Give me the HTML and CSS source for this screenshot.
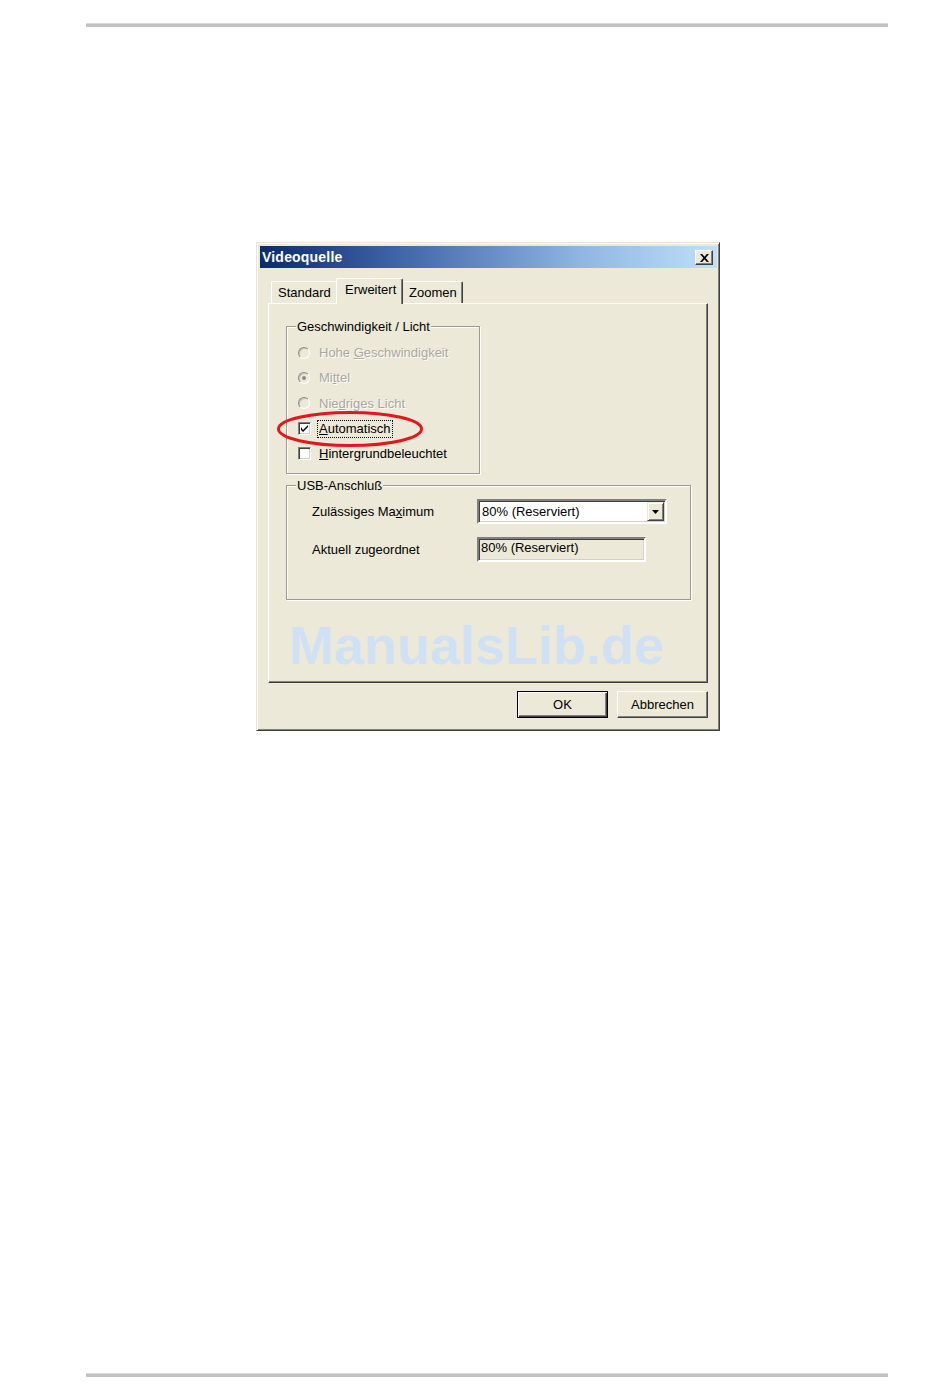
FILE: index.html
```html
<!DOCTYPE html>
<html lang="de">
<head>
<meta charset="utf-8">
<title>Videoquelle</title>
<link rel="stylesheet" href="styles.css">
</head>
<body>
<div class="page">
  <div class="rule rule-top"></div>

  <div class="dialog">
    <div class="titlebar">
      <span class="title">Videoquelle</span>
      <span class="close-btn">
        <svg width="9" height="8" viewBox="0 0 9 8"><path d="M0 0h2.2l2.3 2.8L6.8 0H9L5.6 4 9 8H6.8L4.5 5.2 2.2 8H0l3.4-4z" fill="#000"/></svg>
      </span>
    </div>

    <div class="content">
      <div class="tabs">
        <div class="tab tab-standard">Standard</div>
        <div class="tab tab-active">Erweitert</div>
        <div class="tab tab-zoom">Zoomen</div>
      </div>

      <div class="panel">
        <fieldset class="group group-speed">
          <legend>Geschwindigkeit / Licht</legend>
          <div class="rows">
            <div class="row disabled"><span class="radio"></span><span class="label">Hohe <u>G</u>eschwindigkeit</span></div>
            <div class="row disabled"><span class="radio checked"></span><span class="label">Mi<u>t</u>tel</span></div>
            <div class="row disabled"><span class="radio"></span><span class="label">Nie<u>d</u>riges Licht</span></div>
            <div class="row row-auto">
              <span class="checkbox"><svg width="7" height="7" viewBox="0 0 7 7"><path d="M0 2v3l2 2 5-5V0L2 5z" fill="#000"/></svg></span>
              <span class="label focus"><u>A</u>utomatisch</span>
              <svg class="mark" width="150" height="38" viewBox="0 0 150 38"><ellipse cx="74" cy="19" rx="71.5" ry="16.5" fill="none" stroke="#e5151b" stroke-width="3"/></svg>
            </div>
            <div class="row"><span class="checkbox"></span><span class="label"><u>H</u>intergrundbeleuchtet</span></div>
          </div>
        </fieldset>

        <fieldset class="group group-usb">
          <legend>USB-Anschluß</legend>
          <div class="usb-rows">
            <div class="usb-row">
              <span class="usb-label">Zulässiges Ma<u>x</u>imum</span>
              <div class="combo">
                <span class="combo-text">80% (Reserviert)</span>
                <span class="combo-btn"><svg width="7" height="4" viewBox="0 0 7 4"><path d="M0 0h7L3.5 4z" fill="#000"/></svg></span>
              </div>
            </div>
            <div class="usb-row usb-row-2">
              <span class="usb-label">Aktuell zugeordnet</span>
              <div class="readonly">80% (Reserviert)</div>
            </div>
          </div>
        </fieldset>

        <div class="watermark">ManualsLib.de</div>
      </div>

      <div class="footer">
        <div class="btn btn-default"><span>OK</span></div>
        <div class="btn">Abbrechen</div>
      </div>
    </div>
  </div>

  <div class="rule rule-bottom"></div>
</div>
</body>
</html>
```

FILE: styles.css
```css
* { box-sizing: border-box; }

body {
  margin: 0;
  background: #fff;
  font-family: "Liberation Sans", Arial, sans-serif;
  font-size: 13px;
  color: #000;
}

.page {
  width: 950px;
  height: 1398px;
  display: flex;
  flex-direction: column;
}

.rule {
  margin-left: 86px;
  width: 802px;
  height: 4px;
  background: #c2c2c2;
  border-top: 1px solid #dadada;
  flex: none;
}
.rule-top { margin-top: 23px; }
.rule-bottom { margin-top: 642px; }

/* dialog window */
.dialog {
  margin: 215px 0 0 256px;
  width: 464px;
  height: 489px;
  flex: none;
  background: #ece9d8;
  border: 1px solid;
  border-color: #e6e3d4 #404040 #404040 #e6e3d4;
  box-shadow: inset 1px 1px #fff, inset -1px -1px #808080;
  padding: 3px 2px 0 3px;
  display: flex;
  flex-direction: column;
}

.titlebar {
  height: 22px;
  flex: none;
  display: flex;
  align-items: center;
  justify-content: space-between;
  padding: 0 4px 0 2px;
  background: linear-gradient(to right, #0c2a6e 0%, #3f64a8 30%, #8fb5e2 70%, #bfe0fa 100%);
}
.title {
  color: #fff;
  font-weight: bold;
  font-size: 14px;
  letter-spacing: 0.2px;
}
.close-btn {
  width: 18px;
  height: 15px;
  background: #ece9d8;
  border: 1px solid;
  border-color: #fff #404040 #404040 #fff;
  box-shadow: inset -1px -1px #808080;
  display: flex;
  align-items: center;
  justify-content: center;
  margin-top: 1px;
}

.content {
  flex: 1;
  display: flex;
  flex-direction: column;
  padding: 10px 9px 0 8px;
}

/* tabs */
.tabs {
  display: flex;
  align-items: flex-end;
  height: 25px;
  flex: none;
  padding-left: 3px;
  position: relative;
  z-index: 1;
}
.tab {
  height: 22px;
  display: flex;
  align-items: center;
  border-top: 1px solid #fff;
  border-left: 1px solid #fff;
  border-right: 1px solid #404040;
  box-shadow: inset -1px 0 #808080;
  border-radius: 2px 2px 0 0;
  background: #ece9d8;
  white-space: nowrap;
}
.tab-standard { width: 65px; padding-left: 6px; border-right: none; box-shadow: none; }
.tab-active {
  width: 67px;
  height: 26px;
  margin-bottom: -1px;
  padding-left: 8px;
  padding-bottom: 4px;
}
.tab-zoom { width: 60px; padding-left: 6px; border-left: none; }

.panel {
  height: 380px;
  flex: none;
  border: 1px solid;
  border-color: #fff #404040 #404040 #fff;
  box-shadow: inset -1px -1px #808080;
  padding: 15px 0 0 17px;
  display: flex;
  flex-direction: column;
}

/* group boxes */
.group {
  margin: 0;
  min-width: 0;
  border: 1px solid #9c9a92;
  box-shadow: inset 1px 1px #fff, 1px 1px #fff;
  padding: 0 0 0 9px;
}
.group legend {
  padding: 0 1px;
  margin: 0;
  line-height: 15px;
  background: #ece9d8;
}
.group-speed { width: 194px; height: 155px; }
.group-usb { width: 405px; height: 122px; margin-top: 4px; }

.rows {
  padding: 6px 0 0 2px;
  display: flex;
  flex-direction: column;
}
.row {
  height: 25.3px;
  display: flex;
  align-items: center;
  position: relative;
}
.row .label { margin-left: 8px; white-space: nowrap; }
.row.disabled .label {
  margin-left: 9px;
  color: #a9a79e;
  text-shadow: 1px 1px 0 #fff;
}
.row.disabled u { text-decoration-color: #a9a79e; }

.radio {
  width: 12px;
  height: 12px;
  border-radius: 50%;
  border: 1px solid;
  border-color: #8f8d86 #fff #fff #8f8d86;
  box-shadow: inset 1px 1px #c6c4ba;
  background: #ece9d8;
  display: flex;
  align-items: center;
  justify-content: center;
  flex: none;
}
.radio.checked::after {
  content: "";
  width: 4px;
  height: 4px;
  border-radius: 50%;
  background: #8f8d86;
}

.checkbox {
  width: 13px;
  height: 13px;
  flex: none;
  background: #fff;
  border: 1px solid;
  border-color: #808080 #fff #fff #808080;
  box-shadow: inset 1px 1px #404040, inset -1px -1px #d4d0c8;
  display: flex;
  align-items: center;
  justify-content: center;
}

.label.focus {
  outline: 1px dotted #000;
  outline-offset: 0;
  padding: 0 1px;
  margin-left: 7px;
  line-height: 16px;
}

.mark {
  position: absolute;
  left: -22px;
  top: -6px;
  pointer-events: none;
}

/* USB group */
.usb-rows {
  padding: 6px 0 0 16px;
  display: flex;
  flex-direction: column;
}
.usb-row {
  display: flex;
  align-items: center;
  height: 25px;
}
.usb-row-2 { margin-top: 13px; }
.usb-label { width: 165px; flex: none; white-space: nowrap; }

.combo {
  width: 190px;
  height: 25px;
  background: #fff;
  border: 2px solid;
  border-color: #808080 #fff #fff #808080;
  box-shadow: inset 1px 1px #404040, inset -1px -1px #d4d0c8;
  display: flex;
  align-items: center;
  padding: 0 1px 0 3px;
}
.combo-text { flex: 1; }
.combo-btn {
  width: 17px;
  height: 19px;
  background: #ece9d8;
  border: 1px solid;
  border-color: #ece9d8 #404040 #404040 #ece9d8;
  box-shadow: inset 1px 1px #fff, inset -1px -1px #808080;
  display: flex;
  align-items: center;
  justify-content: center;
}

.readonly {
  width: 169px;
  height: 25px;
  border: 2px solid;
  border-color: #808080 #fff #fff #808080;
  box-shadow: inset 1px 1px #404040, inset -1px -1px #d4d0c8;
  padding: 1px 0 0 2px;
  line-height: 16px;
}

.watermark {
  margin: 15px 0 0 3px;
  font-weight: bold;
  font-size: 54px;
  line-height: 60px;
  color: #d0e1f6;
  white-space: nowrap;
}

/* footer buttons */
.footer {
  display: flex;
  justify-content: flex-end;
  gap: 9px;
  margin-top: 8px;
}
.btn {
  width: 91px;
  height: 27px;
  display: flex;
  align-items: center;
  justify-content: center;
  background: #ece9d8;
  border: 1px solid;
  border-color: #fff #404040 #404040 #fff;
  box-shadow: inset -1px -1px #808080;
}
.btn-default {
  border: 1px solid #000;
  box-shadow: inset 1px 1px #fff, inset -1px -1px #404040, inset -2px -2px #808080;
}
```
